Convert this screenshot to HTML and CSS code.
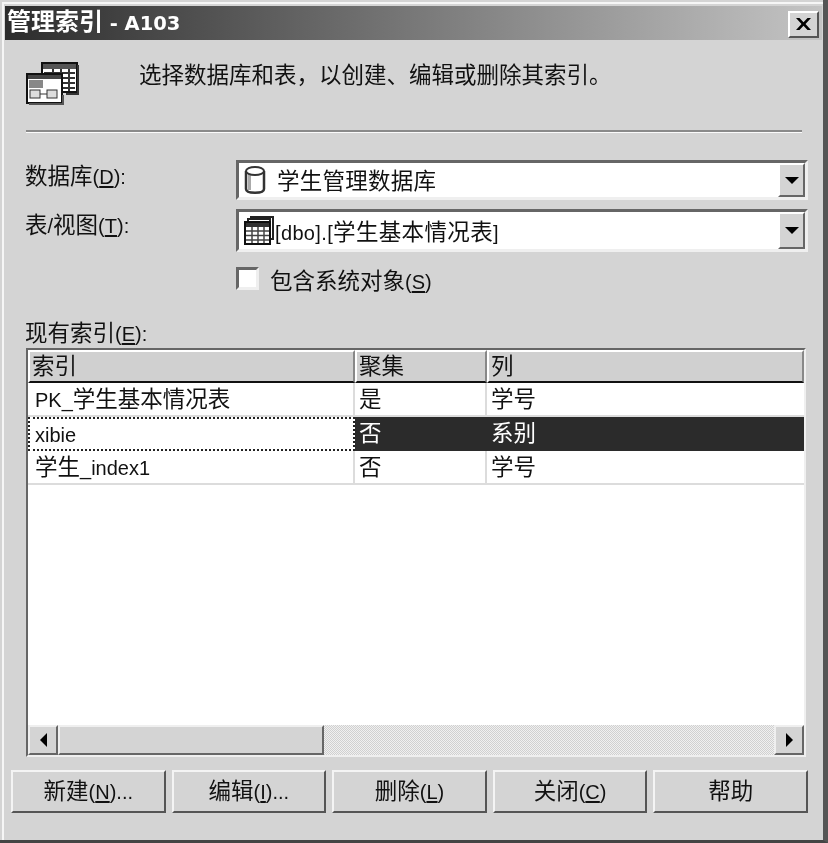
FILE: index.html
```html
<!DOCTYPE html>
<html lang="zh-CN">
<head>
  <meta charset="UTF-8" />
  <title>管理索引 - A103</title>
  <link rel="stylesheet" href="styles.css">
</head>
<body>
  <div class="window">
    <div class="frame">
      <div class="titlebar">
        <span class="title">管理索引 <span class="title-lat">- A103</span></span>
        <button class="close-btn">
          <svg width="17" height="14" viewBox="0 0 17 14"><path d="M1 1h3.500L8.500 5.200 12.500 1H16l-5.500 6 5.500 6h-3.500L8.500 8.800 4.500 13H1l5.500-6z" fill="#000"/></svg>
        </button>
      </div>

      <div class="content">
        <div class="intro">
          <svg class="intro-icon" width="54" height="44" viewBox="0 0 54 44">
            <rect x="16" y="2" width="35" height="29" fill="#fff" stroke="#111" stroke-width="2"/>
            <rect x="17" y="3" width="33" height="5" fill="#555"/>
            <path d="M18 12h31M18 17h31M18 22h31M18 27h31M27 8v22M35 8v22M43 8v22" stroke="#333" stroke-width="2"/>
            <path d="M52 4v29H40" stroke="#333" stroke-width="2" fill="none"/>
            <rect x="1" y="13" width="35" height="29" fill="#fff" stroke="#111" stroke-width="2"/>
            <rect x="2" y="14" width="33" height="4" fill="#444"/>
            <rect x="3" y="19" width="14" height="8" fill="#888"/>
            <rect x="4" y="29" width="10" height="8" fill="#ddd" stroke="#333"/>
            <rect x="21" y="29" width="10" height="8" fill="#ddd" stroke="#333"/>
            <path d="M14 33h7" stroke="#333"/>
            <path d="M3 43h34V34" stroke="#555" stroke-width="2" fill="none"/>
          </svg>
          <p class="intro-text">选择数据库和表，以创建、编辑或删除其索引。</p>
        </div>
        <div class="sep"></div>

        <div class="form-row first">
          <label><span>数据库</span><span class="lat">(<u>D</u>):</span></label>
          <div class="combo">
            <svg class="combo-icon db" width="24" height="30" viewBox="0 0 24 30">
              <path d="M3 6v18c0 5 18 5 18 0V6" fill="#fff" stroke="#333" stroke-width="2.500"/>
              <path d="M6.500 9v16" stroke="#aaa" stroke-width="3"/>
              <ellipse cx="12" cy="6" rx="9" ry="4" fill="#fff" stroke="#333" stroke-width="2"/>
            </svg>
            <span class="combo-text gap">学生管理数据库</span>
            <span class="combo-arrow"><i></i></span>
          </div>
        </div>
        <div class="form-row second">
          <label><span>表</span><span class="lat">/</span><span>视图</span><span class="lat">(<u>T</u>):</span></label>
          <div class="combo">
            <svg class="combo-icon tbl" width="30" height="29" viewBox="0 0 30 29">
              <path d="M7 4V1h22v22h-3" fill="none" stroke="#222" stroke-width="2"/>
              <path d="M4 6V3h22v3" fill="none" stroke="#222" stroke-width="2"/>
              <rect x="1" y="6" width="25" height="22" fill="#fff" stroke="#111" stroke-width="2"/>
              <rect x="2" y="7" width="23" height="4" fill="#333"/>
              <path d="M2 15h23M2 19.500h23M2 24h23M8 11v16M14 11v16M20 11v16" stroke="#444" stroke-width="1.500"/>
            </svg>
            <span class="combo-text spaced"><span class="lat">[dbo].[</span>学生基本情况表<span class="lat">]</span></span>
            <span class="combo-arrow"><i></i></span>
          </div>
        </div>
        <div class="check-row">
          <span class="checkbox"></span>
          <span>包含系统对象<span class="lat">(<u>S</u>)</span></span>
        </div>

        <div class="list-label">现有索引<span class="lat">(<u>E</u>):</span></div>
        <div class="listview">
          <table class="index-table">
            <thead>
              <tr><th class="col-name">索引</th><th class="col-cluster">聚集</th><th>列</th></tr>
            </thead>
            <tbody>
              <tr><td class="name-cell"><span class="lat">PK_</span>学生基本情况表</td><td>是</td><td>学号</td></tr>
              <tr class="selected"><td class="name-cell"><span class="lat">xibie</span></td><td>否</td><td>系别</td></tr>
              <tr><td class="name-cell">学生<span class="lat">_index1</span></td><td>否</td><td>学号</td></tr>
            </tbody>
          </table>
          <div class="list-empty"></div>
          <div class="scrollbar">
            <span class="sb-btn"><i class="arrow-left"></i></span>
            <span class="sb-thumb"></span>
            <span class="sb-track"></span>
            <span class="sb-btn"><i class="arrow-right"></i></span>
          </div>
        </div>

        <div class="buttons">
          <button class="btn">新建<span class="lat">(<u>N</u>)...</span></button>
          <button class="btn">编辑<span class="lat">(<u>I</u>)...</span></button>
          <button class="btn">删除<span class="lat">(<u>L</u>)</span></button>
          <button class="btn">关闭<span class="lat">(<u>C</u>)</span></button>
          <button class="btn">帮助</button>
        </div>
      </div>
    </div>
  </div>
</body>
</html>
```

FILE: styles.css
```css
* {
  box-sizing: border-box;
}
html, body {
  margin: 0;
  height: 100%;
  overflow: hidden;
}
body {
  background: #d4d4d4;
  color: #111;
  font-family: "Liberation Sans", "Noto Sans CJK SC", sans-serif;
  font-size: 22.5px;
}
.lat {
  font-size: 20px;
}
u {
  text-underline-offset: 2px;
}
.window {
  width: 828px;
  height: 843px;
  padding: 2px 0 0 2px;
  background: #d4d4d4;
  border-right: 5px solid #555;
  border-bottom: 3px solid #444;
  filter: blur(0.4px);
}
.frame {
  height: 100%;
  padding: 2px 1px 0 1px;
  border-top: 2px solid #f6f6f6;
  border-left: 2px solid #f6f6f6;
}
.titlebar {
  height: 34px;
  display: flex;
  align-items: center;
  justify-content: space-between;
  padding: 0 3px 0 2px;
  background: linear-gradient(to right, #2c2c2c, #c4c4c4);
  color: #fff;
}
.title {
  font-weight: 700;
  font-size: 24px;
  line-height: 30px;
  white-space: nowrap;
}
.title-lat {
  font-family: "DejaVu Sans", sans-serif;
  font-size: 19.500px;
}
.close-btn {
  width: 31px;
  height: 27px;
  padding: 0;
  margin-top: 2px;
  display: flex;
  align-items: center;
  justify-content: center;
  background: #d4d4d4;
  border: 2px solid;
  border-color: #fff #555 #555 #fff;
}
.content {
  padding: 0 14px 0 21px;
}
.intro {
  height: 90px;
  display: flex;
  padding-top: 20px;
}
.intro-icon {
  flex: none;
  margin-top: 1px;
}
.intro-text {
  margin: 0 0 0 59px;
  line-height: 32px;
  white-space: nowrap;
}
.sep {
  height: 3px;
  margin-right: 6px;
  border-top: 2px solid #8a8a8a;
  border-bottom: 1px solid #fbfbfb;
}
.form-row {
  display: flex;
  align-items: flex-start;
}
.form-row.first {
  margin-top: 27px;
  height: 40px;
}
.form-row.second {
  margin-top: 9px;
  height: 43px;
}
.form-row label {
  width: 210px;
  margin-left: -1px;
  margin-right: 1px;
  padding-top: 1px;
  line-height: 32px;
  flex: none;
  white-space: nowrap;
}
.combo {
  flex: 1;
  height: 100%;
  display: flex;
  align-items: center;
  background: #fff;
  border: 3px solid;
  border-color: #666 #efefef #efefef #666;
}
.combo-icon {
  flex: none;
}
.combo-icon.db {
  margin-left: 4px;
}
.combo-icon.tbl {
  margin-left: 5px;
}
.combo-text {
  flex: 1;
  margin-left: 0;
  padding-bottom: 2px;
  white-space: nowrap;
}
.combo-text.gap {
  margin-left: 10px;
  letter-spacing: 0.25px;
}
.combo-text.spaced {
  margin-left: 1px;
  letter-spacing: 0.35px;
}
.combo-arrow {
  width: 27px;
  height: 100%;
  display: flex;
  align-items: center;
  justify-content: center;
  background: #d4d4d4;
  border: 2px solid;
  border-color: #fff #666 #666 #fff;
}
.combo-arrow i {
  border-left: 7px solid transparent;
  border-right: 7px solid transparent;
  border-top: 7px solid #000;
}
.check-row {
  margin: 15px 0 0 210px;
  height: 23px;
  display: flex;
  align-items: center;
  gap: 11px;
  white-space: nowrap;
}
.checkbox {
  width: 23px;
  height: 23px;
  background: #fff;
  border: 3px solid;
  border-color: #666 #efefef #efefef #666;
}
.list-label {
  margin-top: 32px;
  height: 26px;
  line-height: 24px;
  margin-left: -1px;
}
.listview {
  height: 409px;
  margin-right: 2px;
  display: flex;
  flex-direction: column;
  background: #fff;
  border: 2px solid;
  border-color: #666 #efefef #efefef #666;
}
.index-table {
  width: 100%;
  table-layout: fixed;
  border-collapse: separate;
  border-spacing: 0;
}
.index-table th {
  height: 33px;
  padding: 0 0 0 2px;
  font-weight: 400;
  text-align: left;
  background: #d0d0d0;
  border: 2px solid;
  border-color: #fff #888 #111 #fff;
  line-height: 28px;
}
.col-name {
  width: 327px;
}
.col-cluster {
  width: 132px;
}
.index-table td {
  height: 34px;
  padding: 1px 0 0 4px;
  line-height: 30px;
  white-space: nowrap;
  border-right: 2px solid #dcdcdc;
  border-bottom: 2px solid #dcdcdc;
}
.index-table td:last-child {
  border-right: 0;
}
.index-table td.name-cell {
  padding-left: 7px;
}
.selected td {
  background: #2b2b2b;
  color: #fff;
  border-color: #2b2b2b;
}
.selected td.name-cell {
  background: #fff;
  color: #111;
  border: 0;
  outline: 2px dotted #222;
  outline-offset: -2px;
}
.list-empty {
  flex: 1;
}
.scrollbar {
  height: 30px;
  display: flex;
  background: #d4d4d4;
}
.sb-btn, .sb-thumb {
  background: #d4d4d4;
  border: 2px solid;
  border-color: #efefef #666 #666 #efefef;
}
.sb-btn {
  width: 30px;
  display: flex;
  align-items: center;
  justify-content: center;
}
.sb-thumb {
  width: 266px;
}
.sb-track {
  flex: 1;
  background: repeating-conic-gradient(#d0d0d0 0 25%, #f0f0f0 0 50%) 0 0 / 2px 2px;
}
.arrow-left {
  border-top: 7px solid transparent;
  border-bottom: 7px solid transparent;
  border-right: 7px solid #000;
}
.arrow-right {
  border-top: 7px solid transparent;
  border-bottom: 7px solid transparent;
  border-left: 7px solid #000;
}
.buttons {
  margin: 13px 0 0 -15px;
  display: flex;
  gap: 6px;
}
.btn {
  flex: 1;
  height: 43px;
  padding: 0 0 5px;
  font: inherit;
  color: inherit;
  white-space: nowrap;
  background: #d4d4d4;
  border: 2px solid;
  border-color: #f4f4f4 #555 #555 #f4f4f4;
}
```
